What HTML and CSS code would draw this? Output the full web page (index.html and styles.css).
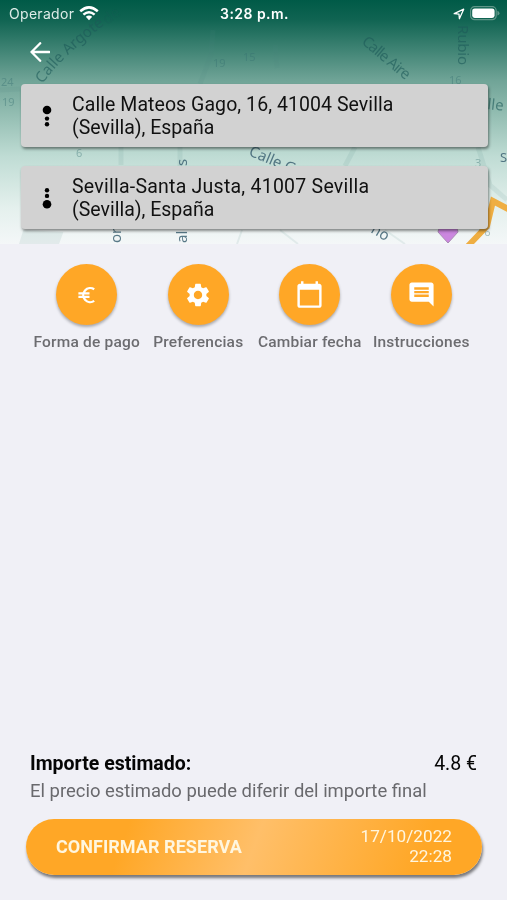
FILE: index.html
```html
<!DOCTYPE html>
<html lang="es">
<head>
    <meta charset="UTF-8">
    <meta name="viewport" content="width=device-width, initial-scale=1.0">
    <title>Confirmar reserva</title>
    <link rel="stylesheet" href="styles.css">
</head>
<body>

    <!-- Cabecera con mapa -->
    <header class="top">
        <svg class="map" viewBox="0 0 507 244" preserveAspectRatio="none">
            <defs>
                <linearGradient id="fade" x1="0" y1="0" x2="0" y2="1">
                    <stop offset="0" stop-color="#005a47"/>
                    <stop offset="0.08" stop-color="#106452"/>
                    <stop offset="0.33" stop-color="#70a497"/>
                    <stop offset="0.5" stop-color="#9bc3b8"/>
                    <stop offset="0.64" stop-color="#bfdcd4"/>
                    <stop offset="0.85" stop-color="#e4f0ed"/>
                    <stop offset="1" stop-color="#f4f7f8"/>
                </linearGradient>
                <path id="argote" d="M43 84 Q62 54 126 9"/>
            </defs>
            <rect width="507" height="244" fill="url(#fade)"/>
            <g class="roads">
                <path d="M213 30 L211 55 L200 84M0 90 L20 89M275 45 L277 68M355 147 L345 166M121 147 L121 165M180 147 L180 166M478 147 L490 185 L507 200"/>
                <path class="block" d="M24 231 L62 233 L58 244 L20 244ZM242 230 L237 244M280 230 L298 244M385 230 L405 244"/>
            </g>
            <g class="street">
                <text><textPath href="#argote">Calle Argote</textPath></text>
                <text transform="translate(107 25) rotate(-36)" opacity=".35">de</text>
                <text transform="translate(361 43) rotate(40)" textLength="58">Calle Aire</text>
                <text transform="translate(458 25) rotate(90)" textLength="40">Rubio</text>
                <text transform="translate(487 109) rotate(6)">lle</text>
            </g>
            <g class="number">
                <text x="1" y="86">24</text>
                <text x="2" y="106">19</text>
                <text x="213" y="67">19</text>
                <text x="243" y="61">15</text>
                <text x="449" y="84">16</text>
                <text x="76" y="157">6</text>
                <text x="475" y="167">3</text>
                <text x="478" y="236">16</text>
            </g>
            <g class="street near">
                <text transform="translate(248 155) rotate(23)">Calle G</text>
                <text transform="translate(187 166) rotate(-90)">s</text>
                <text class="small" x="500" y="162">S</text>
                <text transform="translate(121 243) rotate(-90)">or</text>
                <text transform="translate(187 243) rotate(-90)">al</text>
                <text transform="translate(370 232) rotate(30)">no</text>
            </g>
            <path class="route" d="M468 246 L487 226 L493 201 L510 210"/>
            <path class="pin" d="M448 243 L438 232 Q438 226 448 226 Q458 226 458 232 Z"/>
        </svg>

        <div class="status">
            <div class="carrier">
                <span>Operador</span>
                <svg width="20" height="15" viewBox="0 0 20 15">
                    <g fill="none" stroke="#fff" stroke-width="2.5">
                        <path d="M1.2 5.3 Q10 -2.6 18.8 5.3"/>
                        <path d="M4.4 8.6 Q10 3.8 15.6 8.6"/>
                    </g>
                    <path d="M6.8 10.8 Q10 8.2 13.2 10.8 L10 14.2 Z" fill="#fff"/>
                </svg>
            </div>
            <span class="clock">3:28 p.m.</span>
            <div class="indicators">
                <svg width="12" height="12" viewBox="0 0 12 12">
                    <path d="M1.2 5.7 L10.7 1.2 L6.4 10.7 L6 6.1 Z" fill="none" stroke="#fff" stroke-width="1.3" stroke-linejoin="round"/>
                </svg>
                <svg width="30" height="15" viewBox="0 0 30 15">
                    <rect x=".6" y=".7" width="25.6" height="13" rx="4" fill="none" stroke="#5f9688" stroke-width="1.2"/>
                    <rect x="2.2" y="2.4" width="22.4" height="9.6" rx="2.4" fill="#fff"/>
                    <path d="M27.4 4.8 Q29.5 5.4 29.5 7.2 Q29.5 9 27.4 9.6 Z" fill="#5f9688"/>
                </svg>
            </div>
        </div>

        <a href="#" class="back" aria-label="Volver">
            <svg width="20" height="20" viewBox="0 0 20 20">
                <path d="M10.2 1.2 L1.5 10 L10.2 18.8 M1.5 10 H19.2" fill="none" stroke="#fff" stroke-width="2.3" stroke-linecap="round" stroke-linejoin="round"/>
            </svg>
        </a>

        <div class="addresses">
            <div class="address">
                <svg width="10" height="22" viewBox="0 0 10 22">
                    <circle cx="5" cy="5" r="4.3"/>
                    <circle cx="5" cy="13.6" r="2.2"/>
                    <circle cx="5" cy="19.2" r="2.2"/>
                </svg>
                <p><span class="origin">Calle Mateos Gago, 16, 41004 Sevilla</span><br>(Sevilla), España</p>
            </div>
            <div class="address">
                <svg width="10" height="22" viewBox="0 0 10 22">
                    <circle cx="5" cy="3.3" r="2.2"/>
                    <circle cx="5" cy="8.9" r="2.2"/>
                    <circle cx="5" cy="17.3" r="4.3"/>
                </svg>
                <p><span class="destination">Sevilla-Santa Justa, 41007 Sevilla</span><br>(Sevilla), España</p>
            </div>
        </div>
    </header>

    <!-- Opciones -->
    <nav class="options">
        <a href="#" class="option">
            <span class="circle">
                <svg width="20" height="20" viewBox="0 0 20 20">
                    <path d="M17.2 4.300 A7 7 0 1 0 17.2 15.900 M1.400 8.400 H12.500 M1.400 11.800 H12.500" fill="none" stroke="#fff" stroke-width="2.300"/>
                </svg>
            </span>
            <span class="label">Forma de pago</span>
        </a>
        <a href="#" class="option">
            <span class="circle">
                <svg width="28" height="28" viewBox="0 0 24 24">
                    <path fill="#fff" d="M19.14 12.94c.04-.3.06-.61.06-.94 0-.32-.02-.64-.07-.94l2.03-1.58c.18-.14.23-.41.12-.61l-1.92-3.32c-.12-.22-.37-.29-.59-.22l-2.39.96c-.5-.38-1.03-.7-1.62-.94l-.36-2.54c-.04-.24-.24-.41-.48-.41h-3.84c-.24 0-.43.17-.47.41l-.36 2.54c-.59.24-1.13.57-1.62.94l-2.39-.96c-.22-.08-.47 0-.59.22L2.74 8.87c-.12.21-.08.47.12.61l2.03 1.58c-.05.3-.09.63-.09.94s.02.64.07.94l-2.03 1.58c-.18.14-.23.41-.12.61l1.92 3.32c.12.22.37.29.59.22l2.39-.96c.5.38 1.03.7 1.62.94l.36 2.54c.05.24.24.41.48.41h3.84c.24 0 .44-.17.47-.41l.36-2.54c.59-.24 1.13-.56 1.62-.94l2.39.96c.22.08.47 0 .59-.22l1.92-3.32c.12-.22.07-.47-.12-.61l-2.01-1.58zM12 15.6c-1.98 0-3.6-1.62-3.6-3.6s1.62-3.6 3.6-3.6 3.6 1.62 3.6 3.6-1.62 3.6-3.6 3.6z"/>
                </svg>
            </span>
            <span class="label">Preferencias</span>
        </a>
        <a href="#" class="option">
            <span class="circle">
                <svg width="29" height="29" viewBox="0 0 24 24">
                    <path fill="#fff" d="M20 3h-1V1h-2v2H7V1H5v2H4c-1.1 0-2 .9-2 2v16c0 1.1.9 2 2 2h16c1.1 0 2-.9 2-2V5c0-1.1-.9-2-2-2zm0 18H4V8h16v13z"/>
                </svg>
            </span>
            <span class="label">Cambiar fecha</span>
        </a>
        <a href="#" class="option">
            <span class="circle">
                <svg width="29" height="29" viewBox="0 0 24 24">
                    <path fill="#fff" d="M21.99 4c0-1.1-.89-2-1.99-2H4c-1.1 0-2 .9-2 2v12c0 1.1.9 2 2 2h14l4 4-.01-18zM18 14H6v-2h12v2zm0-3H6V9h12v2zm0-3H6V6h12v2z"/>
                </svg>
            </span>
            <span class="label">Instrucciones</span>
        </a>
    </nav>

    <!-- Importe y confirmación -->
    <footer class="bottom">
        <div class="price">
            <strong>Importe estimado:</strong>
            <span class="amount">4.8 €</span>
        </div>
        <p class="note">El precio estimado puede diferir del importe final</p>
        <button class="confirm">
            <span class="confirm-text">CONFIRMAR RESERVA</span>
            <span class="date">17/10/2022<br>22:28</span>
        </button>
    </footer>

</body>
</html>
```
FILE: styles.css
```css
* {
    box-sizing: border-box;
}

body {
    margin: 0;
    height: 900px;
    display: flex;
    flex-direction: column;
    overflow: hidden;
    background-color: #f0f0f6;
    font-family: Roboto, sans-serif;
}

p {
    margin: 0;
}

svg {
    display: block;
    flex: none;
}

.top {
    position: relative;
    height: 244px;
    flex: none;
}

/* El mapa queda detrás de la cabecera */
.map {
    position: absolute;
    top: 0;
    left: 0;
    width: 100%;
    height: 100%;
    z-index: -1;
}

.roads {
    fill: none;
    stroke: #4c8580;
    stroke-width: 5px;
    opacity: 0.1;
}

.block {
    fill: #4c8580;
    stroke-width: 2px;
}

.street {
    font: 15px "Noto Sans", sans-serif;
    fill: #1d5a59;
    opacity: 0.6;
}

.near {
    fill: #3d6273;
    opacity: 0.85;
}

.small {
    font-size: 13px;
}

.number {
    font: 11px "Noto Sans", sans-serif;
    fill: #356f70;
    opacity: 0.4;
}

.route {
    fill: none;
    stroke: #efae42;
    stroke-width: 6px;
}

.pin {
    fill: #cb87df;
    stroke: #a98bb4;
}

.status {
    height: 27px;
    padding: 0 7px 0 9px;
    display: grid;
    grid-template-columns: 1fr auto 1fr;
    align-items: center;
    color: white;
    font-family: Inter, sans-serif;
    font-size: 14px;
}

.carrier, .indicators {
    display: flex;
    align-items: center;
    gap: 5px;
}

.carrier {
    color: #dcebe7;
    letter-spacing: 0.3px;
}

.indicators {
    justify-content: flex-end;
}

.clock {
    font-weight: 600;
    letter-spacing: 0.45px;
}

.back {
    display: block;
    width: 20px;
    margin: 15px 0 0 30px;
}

.addresses {
    display: flex;
    flex-direction: column;
    gap: 19px;
    padding: 22px 19px 0 21px;
}

.address {
    height: 63px;
    display: flex;
    align-items: center;
    gap: 20px;
    padding-left: 21px;
    background-color: #d2d2d2;
    border-radius: 4px;
    box-shadow: 1px 2px 3px rgba(0, 0, 0, 0.45);
    color: #111;
    font-size: 19.5px;
    line-height: 23px;
}

.origin {
    letter-spacing: 0.06px;
}

.destination {
    letter-spacing: 0.24px;
}

.options {
    display: flex;
    padding: 20px 30px 0 31px;
}

.option {
    flex: 1 1 0;
    display: flex;
    flex-direction: column;
    align-items: center;
    text-decoration: none;
}

.circle {
    width: 61px;
    height: 61px;
    display: flex;
    align-items: center;
    justify-content: center;
    border-radius: 50%;
    background-color: #ffa726;
    box-shadow: 0 2px 3px rgba(0, 0, 0, 0.3);
}

.label {
    margin-top: 7px;
    color: #6c6c70;
    font-size: 15.5px;
    font-weight: 500;
    letter-spacing: 0.2px;
    line-height: 20px;
    white-space: nowrap;
}

.bottom {
    margin-top: auto;
    padding: 0 25px 25px 26px;
}

.price {
    display: flex;
    justify-content: space-between;
    padding: 0 5px 0 4px;
    color: #050505;
    font-size: 19.5px;
    line-height: 26px;
}

.note {
    padding-left: 4px;
    color: #69696d;
    font-size: 18.45px;
    line-height: 28px;
}

.confirm {
    width: 100%;
    height: 56px;
    margin-top: 14px;
    padding: 0 30px 2px;
    display: flex;
    justify-content: space-between;
    align-items: center;
    border: none;
    border-radius: 28px;
    background: linear-gradient(110deg, #ffa726 22%, #ffbf69 50%, #ffa726 86%);
    box-shadow: 1px 3px 3px rgba(0, 0, 0, 0.5);
    color: #fff6df;
    font-family: inherit;
}

.confirm-text {
    font-size: 18px;
    font-weight: 700;
    letter-spacing: 0.05px;
}

.date {
    font-size: 17.2px;
    line-height: 20px;
    text-align: right;
}
```
